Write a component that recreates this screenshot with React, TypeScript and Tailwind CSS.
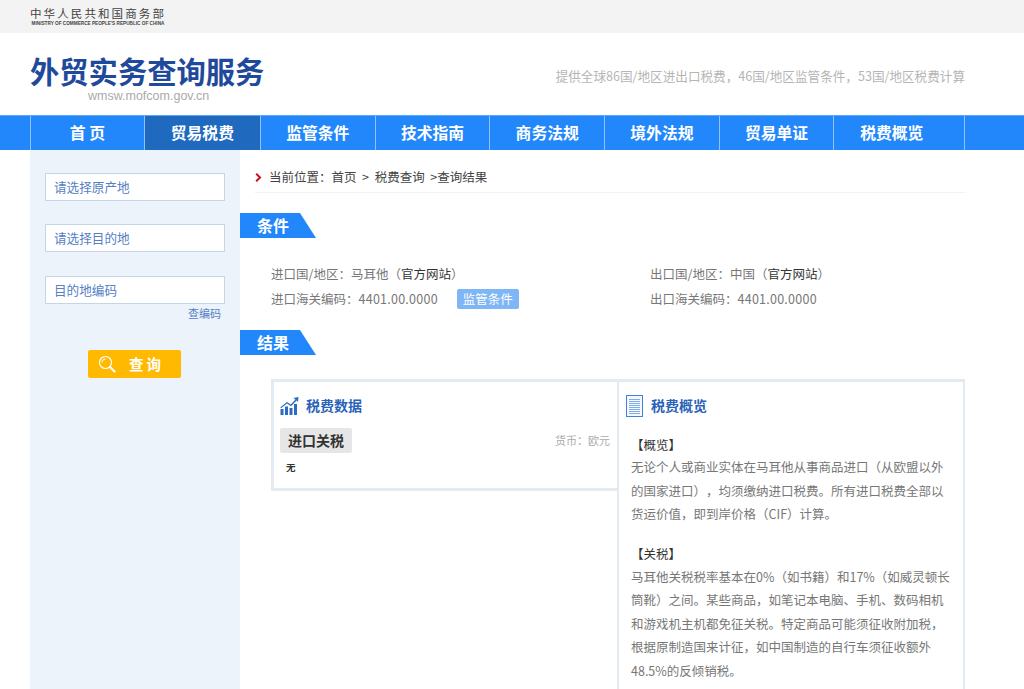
// App.tsx
import React from "react";

const NAV = ["首 页", "贸易税费", "监管条件", "技术指南", "商务法规", "境外法规", "贸易单证", "税费概览"];

const SectionTab = ({ title }: { title: string }) => (
  <div className="w-[76px] h-[25px] bg-[#2287fb] [clip-path:polygon(0_0,60px_0,76px_100%,0_100%)] pl-[17px] text-white text-[16px] font-bold leading-[25px]">
    {title}
  </div>
);

const ChartIcon = () => (
  <svg width="19" height="18" viewBox="0 0 19 18" className="shrink-0">
    <g fill="#2a6cc4">
      <rect x="0.5" y="12" width="3" height="6" />
      <rect x="5" y="9.5" width="3" height="8.5" />
      <rect x="9.5" y="11" width="3" height="7" />
      <rect x="14" y="7" width="3" height="11" />
      <path d="M13.5 1 L18.5 0 L18 5 L16.6 3.6 L11 9.2 L7 6.6 L1 11.2 L0.4 10.2 L7 5 L10.8 7.5 L15.4 2.6 Z" />
    </g>
  </svg>
);

const DocIcon = () => (
  <svg width="17" height="22" viewBox="0 0 17 22" className="shrink-0">
    <rect x="0.5" y="0.5" width="16" height="21" fill="#f4f8fe" stroke="#3f82d8" />
    <g stroke="#7fade8" strokeWidth="1">
      <path d="M3 4.5H14M3 6.5H14M3 8.5H14M3 10.5H14M3 12.5H14M3 14.5H14M3 16.5H14M3 18.5H14" />
    </g>
  </svg>
);

const SearchGlass = () => (
  <svg width="18" height="18" viewBox="0 0 18 18" fill="none" className="shrink-0">
    <circle cx="7.5" cy="7.5" r="6" stroke="#fff" strokeWidth="1.2" />
    <path d="M4 7.5A3.5 3.5 0 0 1 7.5 4" stroke="#fff" strokeWidth="1" />
    <path d="M12 12l4.5 4.5" stroke="#fff" strokeWidth="2.2" strokeLinecap="round" />
  </svg>
);

const SideInput = ({ label }: { label: string }) => (
  <div className="h-[28px] w-[180px] border border-[#c5d5e8] bg-white pl-[8px] text-[12.6px] leading-[26px] text-[#5580c4]">
    {label}
  </div>
);

export default function App() {
  return (
    <div className="h-[689px] overflow-hidden bg-white font-['Noto_Sans_CJK_SC','Liberation_Sans',sans-serif] text-[12.5px] text-[#777] [text-spacing-trim:space-all]">
      {/* top bar */}
      <div className="h-[33px] bg-[#f3f3f3] pl-[30px] pt-[6px]">
        <div className="w-[136px] text-center">
          <div className="text-[11.5px] leading-[15px] tracking-[2.1px] text-[#444] whitespace-nowrap">中华人民共和国商务部</div>
          <div className="text-[4.7px] leading-[6px] font-bold text-[#444] whitespace-nowrap font-['Liberation_Sans',sans-serif]">MINISTRY OF COMMERCE PEOPLE'S REPUBLIC OF CHINA</div>
        </div>
      </div>

      {/* header */}
      <div className="h-[82px] w-[965px] pl-[30px] flex justify-between items-start">
        <div className="pt-[17px] w-[236px]">
          <div className="text-[29.3px] leading-[40px] font-bold text-[#1f4a9c] whitespace-nowrap">外贸实务查询服务</div>
          <div className="pl-[58px] -mt-[2px] text-[12.5px] leading-[16px] text-[#aaa] font-['Liberation_Sans',sans-serif]">wmsw.mofcom.gov.cn</div>
        </div>
        <div className="pt-[33px] text-[12.6px] leading-[20px] text-[#b5b5b5] whitespace-nowrap">
          提供全球86国/地区进出口税费，46国/地区监管条件，53国/地区税费计算
        </div>
      </div>

      {/* nav */}
      <div className="h-[35px] bg-[#2287fb] border-t border-[#5aa5fc] pl-[30px]">
        <div className="flex w-[935px] h-full border-l border-r border-[#8fc2fc]">
          {NAV.map((n, i) => (
            <div
              key={n}
              className={`shrink-0 border-r border-[#8fc2fc] text-center text-white text-[15.8px] font-bold leading-[33px] last:border-r-0 ${
                i === 0 ? "w-[113.7px]" : i === 1 ? "w-[116.3px] bg-[#1f69bf]" : "w-[114.7px]"
              }`}
            >
              {n}
            </div>
          ))}
        </div>
      </div>

      <div className="flex pl-[30px] h-[539px]">
        {/* sidebar */}
        <div className="w-[210px] shrink-0 bg-[#edf3fb] pl-[15px] pt-[23px]">
          <SideInput label="请选择原产地" />
          <div className="mt-[23px]">
            <SideInput label="请选择目的地" />
          </div>
          <div className="mt-[24px]">
            <SideInput label="目的地编码" />
          </div>
          <div className="w-[176px] text-right text-[11px] leading-[18px] text-[#5580c4]">查编码</div>
          <div className="mt-[28px] ml-[43px] w-[93px] h-[28px] rounded-[2px] bg-[#ffb900] flex items-center pl-[10px] gap-[13px] text-white text-[14.5px] font-bold">
            <SearchGlass />
            <span className="tracking-[3px] leading-[28px]">查询</span>
          </div>
        </div>

        {/* main */}
        <div className="w-[725px] shrink-0">
          <div className="ml-[15px] h-[43px] border-b border-[#f2f2f2] flex items-center pt-[12px] text-[#444]">
            <svg width="7" height="9" viewBox="0 0 7 9" fill="none" className="shrink-0 mr-[7px] mt-[1px]">
              <path d="M1.2 .8 L5 4.5 L1.2 8.2" stroke="#c8101c" strokeWidth="2" />
            </svg>
            <span className="whitespace-pre">当前位置：首页  &gt;  税费查询  &gt;查询结果</span>
          </div>

          <div className="mt-[20px]">
            <SectionTab title="条件" />
          </div>

          <div className="mt-[23px] pl-[31px] grid grid-cols-[379px_1fr] leading-[25px]">
            <div>
              进口国/地区：马耳他（<span className="text-[#333]">官方网站</span>）
            </div>
            <div>
              出口国/地区：中国（<span className="text-[#333]">官方网站</span>）
            </div>
            <div className="flex items-center">
              <span>进口海关编码：<span className="tracking-[0.25px]">4401.00.0000</span></span>
              <span className="ml-[19px] h-[20px] w-[62px] rounded-[2px] bg-[#7fb6f5] text-center text-white leading-[20px]">监管条件</span>
            </div>
            <div>出口海关编码：<span className="tracking-[0.25px]">4401.00.0000</span></div>
          </div>

          <div className="mt-[19px]">
            <SectionTab title="结果" />
          </div>

          <div className="mt-[24px] ml-[31px] flex items-start w-[694px]">
            {/* tax data */}
            <div className="w-[346px] h-[112px] shrink-0 border-[3px] border-r-0 border-[#e2eaf2] pl-[6px] pr-[7px]">
              <div className="flex items-center h-[46px] pt-[1px]">
                <ChartIcon />
                <span className="ml-[7px] text-[14px] font-bold text-[#2a62b8]">税费数据</span>
              </div>
              <div className="flex items-center justify-between">
                <div className="h-[25px] w-[72px] rounded-[2px] bg-[#e6e6e6] text-center text-[14px] font-bold leading-[25px] text-[#333]">进口关税</div>
                <span className="text-[11px] text-[#aaa]">货币：欧元</span>
              </div>
              <div className="pl-[6px] pt-[5px] text-[9.5px] font-bold text-[#333] leading-[18px]">无</div>
            </div>

            {/* overview */}
            <div className="w-[348px] h-[320px] shrink-0 border-x-2 border-t-[3px] border-[#e2eaf2] pl-[12px] pr-[10px]">
              <div className="flex items-center h-[46px] -ml-[5px] pt-[1px]">
                <DocIcon />
                <span className="ml-[8px] text-[14px] font-bold text-[#2a62b8]">税费概览</span>
              </div>
              <div className="leading-[23.5px]">
                <div className="text-[#333] mt-[6px] leading-[21px]">【概览】</div>
                <div>无论个人或商业实体在马耳他从事商品进口（从欧盟以外的国家进口），均须缴纳进口税费。所有进口税费全部以货运价值，即到岸价格（CIF）计算。</div>
                <div className="text-[#333] mt-[17px] leading-[22px]">【关税】</div>
                <div>马耳他关税税率基本在0%（如书籍）和17%（如威灵顿长筒靴）之间。某些商品，如笔记本电脑、手机、数码相机和游戏机主机都免征关税。特定商品可能须征收附加税，根据原制造国来计征，如中国制造的自行车须征收额外48.5%的反倾销税。</div>
              </div>
            </div>
          </div>
        </div>
      </div>
    </div>
  );
}
